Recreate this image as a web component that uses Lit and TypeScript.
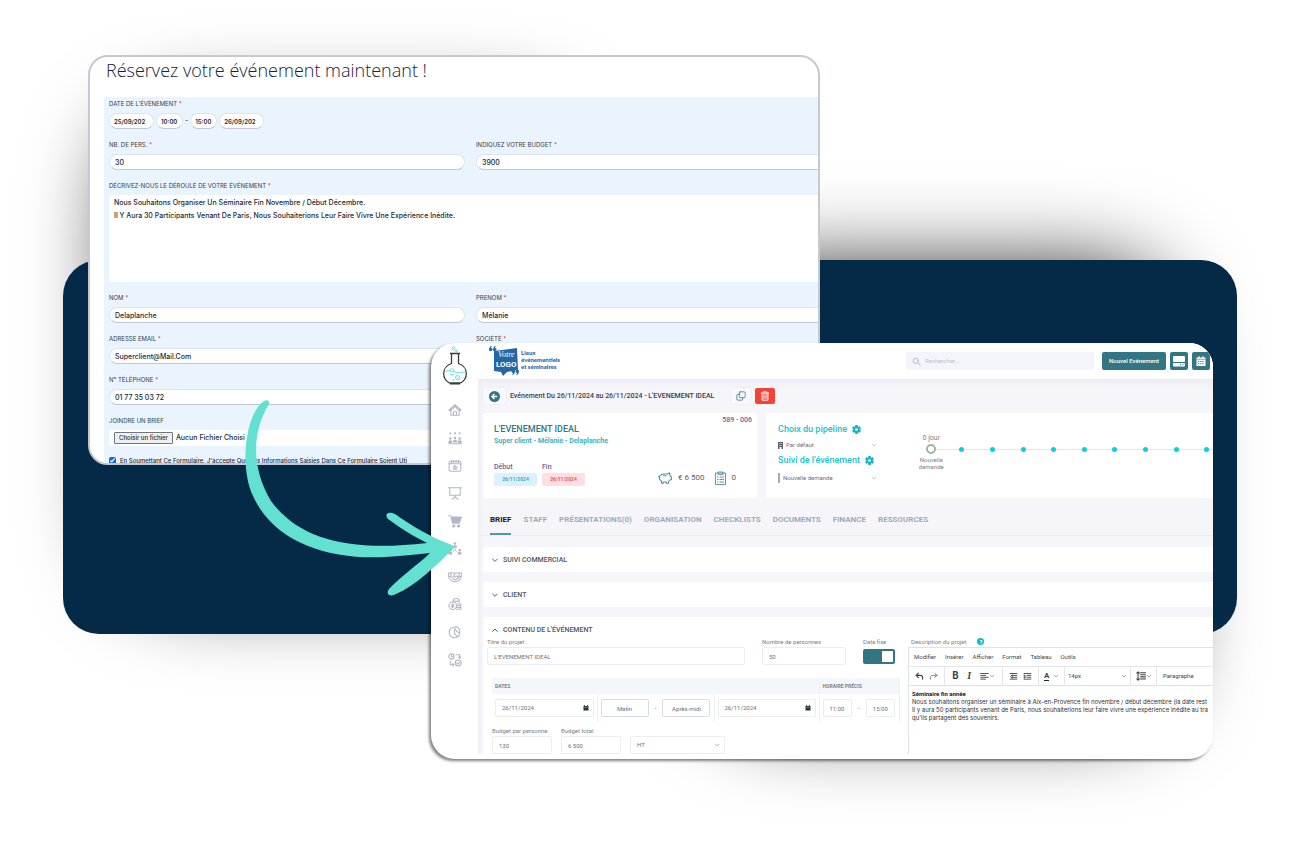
import { LitElement, html, css, svg } from "lit";
import { customElement } from "lit/decorators.js";

const line = (body: unknown, size = 14, weight = "1.8") => html`<svg
  width=${size}
  height=${size}
  viewBox="0 0 24 24"
  fill="none"
  stroke="currentColor"
  stroke-width=${weight}
  stroke-linecap="round"
  stroke-linejoin="round"
  aria-hidden="true"
>${body}</svg>`;

const chevron = svg`<path d="M5 9l7 7 7-7"/>`;
const chevronUp = svg`<path d="M5 16l7-7 7 7"/>`;
const person = (x: number, y: number) => svg`
  <circle cx=${x} cy=${y} r="2.2" fill="currentColor" stroke="none"/>
  <path d="M${x - 3.2} ${y + 7.5}v-2.4a3.2 2.2 0 0 1 6.4 0v2.4z" fill="currentColor" stroke="none"/>`;

const gear = html`<svg width="9" height="9" viewBox="0 0 24 24" aria-hidden="true">
  <g fill="#0fb9c4">
    <rect x="8.500" y="0" width="7" height="24" rx="1"/>
    <rect x="8.500" y="0" width="7" height="24" rx="1" transform="rotate(60 12 12)"/>
    <rect x="8.500" y="0" width="7" height="24" rx="1" transform="rotate(120 12 12)"/>
    <circle cx="12" cy="12" r="8.500"/>
  </g>
  <circle cx="12" cy="12" r="3.6" fill="#fff"/>
</svg>`;

const calendar = html`<svg width="6" height="6" viewBox="0 0 12 12" aria-hidden="true">
  <path d="M1 2h10v9H1z" fill="#2b2f36"/><path d="M3 0v3M9 0v3" stroke="#2b2f36" stroke-width="1.6"/>
  <path d="M2.500 4.500h7" stroke="#fff" stroke-width=".8"/>
</svg>`;

const navItems: [string, unknown][] = [
  ["Accueil", svg`<path d="M2 12L12 3l10 9M5 10v11h14V10M9.500 21v-6h5v6"/><path d="M2 12l2 1.500L12 6l8 7.500 2-1.500"/>`],
  ["Équipes", svg`<g fill="currentColor" stroke="none"><circle cx="4" cy="4" r="1.800"/><circle cx="12" cy="4" r="1.800"/><circle cx="20" cy="4" r="1.800"/></g>${person(4, 13)}${person(12, 12)}${person(20, 13)}<path d="M1 22h22"/>`],
  ["Événements", svg`<rect x="2" y="4" width="20" height="17" rx="2"/><path d="M2 8h20M6 2v4M10 2v4M14 2v4M18 2v4"/><path d="M12 11l1.100 2.400 2.500.3-1.900 1.700.5 2.600-2.200-1.300L9.800 18l.5-2.600-1.900-1.700 2.500-.3z"/>`],
  ["Présentations", svg`<path d="M1 3h22M3 3v13h18V3M12 16v4M12 18l-5 5M12 18l5 5"/>`],
  ["Achats", svg`<path d="M1 3h4l3 13h12"/><path d="M6 5h17l-3 9H8z" fill="currentColor"/><circle cx="10" cy="20.500" r="1.800" fill="currentColor"/><circle cx="18" cy="20.500" r="1.800" fill="currentColor"/>`],
  ["Organisation", svg`${person(12, 2.5)}${person(4, 14)}${person(20, 14)}<path d="M12 11v3M9 17l3-3 3 3" stroke-width="1.400"/>`],
  ["Partenaires", svg`<path d="M1 5h22v5c0 6-5 10-11 10S1 16 1 10z"/><path d="M1 11h4l5 5 2 1 3-1 4-5h4M5 5v6M19 5v6M12 7l-3 4 3 1 3-2 4 4"/>`],
  ["Finance", svg`<circle cx="8" cy="15" r="6.500"/><path d="M8 11.500v7M6 13.500h4M6 16.500h4"/><ellipse cx="14" cy="5" rx="5" ry="2.500"/><path d="M19 5v4M9 5v3M15 12h7v9h-8M15 15h7M15 18h7"/>`],
  ["Temps", svg`<path d="M9 4C4 5 2 9 2 13c0 5 4 9 9 9s9-4 9-8M11 8v6l4 5M13 2c5 2 8 6 7 12l-5-3-4-6z"/>`],
  ["Suivi", svg`<circle cx="6" cy="6" r="4.500"/><path d="M6 3.500V6h2M14 3h6v6M18 7l2 2 2-2M4 14v6h6M8 18l2 2-2 2"/><circle cx="17.500" cy="17" r="5"/><path d="M15 17l2 2 3-3.500"/>`],
];

@customElement("booking-form")
export class BookingForm extends LitElement {
  static styles = css`
    :host {
      display: block;
      min-width: 0;
      overflow: hidden;
      box-sizing: border-box;
      border: 2px solid #c6cad0;
      border-radius: 20px;
      background: #fff;
      color: #23282f;
      font: 400 7px/10px Inter, "Open Sans", sans-serif;
    }
    .heading {
      margin: 0;
      padding: 0 16px;
      height: 40px;
      font: 300 18px/26px "Open Sans", sans-serif;
      color: #16213c;
    }
    .form {
      display: grid;
      grid-template-columns: minmax(0, 1fr) minmax(0, 1fr);
      gap: 11px;
      margin: 0 -19px 0 14px;
      padding: 2px 5px;
      background: #eaf4fe;
    }
    .field {
      display: flex;
      flex-direction: column;
      gap: 4px;
      min-width: 0;
    }
    .wide {
      grid-column: 1 / -1;
    }
    .label {
      font-size: 6px;
      color: #3a4048;
      text-transform: uppercase;
      white-space: nowrap;
    }
    .star {
      color: #e02a3c;
    }
    .row {
      display: flex;
      gap: 2px;
      align-items: center;
    }
    input,
    textarea,
    button {
      font: 500 7px/13px Inter, sans-serif;
      color: #23282f;
      box-sizing: border-box;
      margin: 0;
    }
    .box {
      width: 100%;
      height: 16px;
      padding: 0 5px;
      border: 1px solid #dde4ec;
      border-bottom-color: #c3c8cf;
      border-radius: 8px;
      background: #fff;
    }
    .row .box {
      padding: 0 4px;
      font-size: 6px;
      font-weight: 600;
    }
    .row .date {
      width: 45px;
    }
    .row .time {
      width: 27px;
    }
    textarea {
      display: block;
      width: 100%;
      height: 87px;
      padding: 1px 5px;
      border: 0;
      border-radius: 2px;
      resize: none;
      background: #fff;
    }
    .file {
      display: flex;
      align-items: center;
      gap: 3px;
      height: 16px;
      padding-left: 5px;
      background: #fff;
      font-weight: 500;
      border-radius: 2px;
    }
    .pick {
      height: 12px;
      padding: 0 4px;
      border: 1px solid #70757c;
      border-radius: 1px;
      background: #efefef;
      font-size: 6px;
      line-height: 10px;
    }
    .terms {
      display: flex;
      align-items: center;
      gap: 4px;
      height: 7px;
      font-size: 6px;
      font-weight: 500;
      white-space: nowrap;
    }
    .terms input {
      width: 7px;
      height: 7px;
      accent-color: #0b6be0;
    }
  `;

  private field(id: string, label: string, value: string) {
    return html`<div class="field">
      <label class="label" for=${id}>${label} <span class="star">*</span></label>
      <input class="box" id=${id} .value=${value} />
    </div>`;
  }

  private pickFile() {
    (this.renderRoot.querySelector("#brief") as HTMLInputElement).click();
  }

  render() {
    return html`
      <h1 class="heading">Réservez votre événement maintenant !</h1>
      <form class="form">
        <div class="field wide">
          <label class="label" for="d1">Date de l'événement <span class="star">*</span></label>
          <div class="row">
            <input class="box date" id="d1" .value=${"25/09/202"} />
            <input class="box time" aria-label="Heure de début" .value=${"10:00"} />
            <span>-</span>
            <input class="box time" aria-label="Heure de fin" .value=${"15:00"} />
            <input class="box date" aria-label="Date de fin" .value=${"26/09/202"} />
          </div>
        </div>
        ${this.field("pers", "Nb. de pers.", "30")} ${this.field("budget", "Indiquez votre budget", "3900")}
        <div class="field wide">
          <label class="label" for="desc">Décrivez-nous le déroulé de votre événement <span class="star">*</span></label>
          <textarea id="desc" .value=${"Nous Souhaitons Organiser Un Séminaire Fin Novembre / Début Décembre.\nIl Y Aura 30 Participants Venant De Paris, Nous Souhaiterions Leur Faire Vivre Une Expérience Inédite."}></textarea>
        </div>
        ${this.field("nom", "Nom", "Delaplanche")} ${this.field("prenom", "Prenom", "Mélanie")}
        ${this.field("email", "Adresse email", "Superclient@Mail.Com")} ${this.field("societe", "Société", "")}
        ${this.field("tel", "N° téléphone", "01 77 35 03 72")}
        <div class="field wide">
          <label class="label" for="brief">Joindre un brief</label>
          <div class="file">
            <button class="pick" type="button" @click=${this.pickFile}>Choisir un fichier</button>
            <span>Aucun Fichier Choisi</span>
            <input id="brief" type="file" hidden />
          </div>
        </div>
        <label class="terms wide">
          <input type="checkbox" checked />
          <span>En Soumettant Ce Formulaire, J'accepte Que Les Informations Saisies Dans Ce Formulaire Soient Uti</span>
        </label>
      </form>
    `;
  }
}

@customElement("event-dashboard")
export class EventDashboard extends LitElement {
  static styles = css`
    :host {
      display: grid;
      grid-template-columns: 47px minmax(0, 1fr);
      min-width: 0;
      overflow: hidden;
      border-radius: 24px;
      background: #fff;
      box-shadow: -2px 2px 3px rgba(0, 0, 0, 0.5);
      color: #5f656d;
      font: 400 6px/8px Roboto, sans-serif;
      white-space: nowrap;
    }
    svg {
      display: block;
      flex: none;
    }
    input,
    select,
    button {
      box-sizing: border-box;
      margin: 0;
      padding: 0;
      font: inherit;
      color: inherit;
    }
    button {
      border: 0;
      display: flex;
      align-items: center;
      justify-content: center;
    }
    .side {
      display: flex;
      flex-direction: column;
      align-items: center;
      color: #b3b6c4;
      padding: 3px 0 92px;
      gap: 18px;
    }
    .nav {
      flex: 1;
      display: flex;
      flex-direction: column;
      justify-content: space-between;
    }
    .nav a {
      color: inherit;
    }
    .main {
      overflow: hidden;
      margin-bottom: 5px;
      background: #f6f6fa;
      min-width: 0;
    }
    .top {
      display: flex;
      align-items: center;
      gap: 4px;
      height: 36px;
      padding: 0 0 0 11px;
      margin-right: -19px;
      background: #fff;
    }
    .search {
      display: flex;
      align-items: center;
      gap: 4px;
      width: 188px;
      height: 18px;
      margin: 0 4px 0 auto;
      padding-left: 6px;
      box-sizing: border-box;
      border-radius: 2px;
      background: #f4f5fb;
      color: #b0b3c4;
    }
    .search input {
      border: 0;
      background: none;
      min-width: 0;
      flex: 1;
    }
    .search input::placeholder {
      color: #b9bccb;
    }
    .act {
      height: 18px;
      width: 18px;
      border-radius: 2px;
      background: #327683;
      color: #fff;
      font-weight: 500;
      flex: none;
    }
    .new {
      width: 64px;
    }
    .body {
      padding: 9px 0 0 5px;
      box-shadow: inset 0 8px 12px -6px #e8e7ef, inset 4px 0 4px -2px #eeeef4;
    }
    .crumb {
      display: flex;
      align-items: center;
      gap: 4px;
      height: 16px;
      color: #3a3f47;
      font: 500 7px/16px Roboto, sans-serif;
    }
    .sq {
      width: 20px;
      height: 16px;
      border-radius: 2px;
      background: #f9f9fd;
      box-shadow: 0 0 2px #dcdce8;
      color: #327683;
    }
    .back {
      width: 23px;
    }
    .crumb h1 {
      margin: 0 13px 0 0;
      font: inherit;
    }
    .red {
      background: #f44336;
      color: #fff;
      box-shadow: none;
    }
    .cards {
      display: grid;
      grid-template-columns: minmax(0, 274fr) minmax(0, 447fr);
      gap: 9px;
      margin-top: 9px;
    }
    .card {
      display: flex;
      height: 85px;
      box-sizing: border-box;
      background: #fff;
      border-radius: 3px;
    }
    .sum {
      flex-direction: column;
      padding: 3px 5px 12px 11px;
    }
    .ref {
      text-align: right;
      color: #63659a;
      font: 500 7px/8px Roboto, sans-serif;
    }
    .name {
      margin: 0;
      color: #2c7c87;
      font: 500 9px/11px Roboto, sans-serif;
    }
    .who {
      color: #35b6bc;
      font: 700 7px/12px Roboto, sans-serif;
    }
    .foot {
      display: flex;
      align-items: flex-end;
      gap: 5px;
      margin-top: auto;
    }
    .when {
      color: #63659a;
      font: 500 7px/12px Roboto, sans-serif;
    }
    .pill {
      display: block;
      width: 43px;
      height: 13px;
      border-radius: 2px;
      background: #def0ff;
      color: #2fb3bd;
      text-align: center;
      font: 700 5px/13px Roboto, sans-serif;
    }
    .end {
      background: #ffdfe2;
      color: #f0525f;
    }
    .nums {
      display: flex;
      flex: 1;
      align-items: center;
      justify-content: flex-end;
      gap: 6px;
      padding: 0 16px 1px 0;
      color: #5a6069;
      font: 400 8px/14px Roboto, sans-serif;
    }
    .nums svg {
      color: #4f909b;
    }
    .count {
      margin-left: 4px;
    }
    .pipe {
      padding: 11px 0 0 12px;
      gap: 34px;
    }
    .sets {
      width: 104px;
      flex: none;
    }
    .set {
      display: flex;
      align-items: center;
      gap: 5px;
      margin: 0;
      color: #17c3cd;
      font: 500 9px/11px Roboto, sans-serif;
    }
    .pick {
      display: flex;
      align-items: center;
      gap: 3px;
      height: 20px;
      padding-right: 5px;
      color: #6a7078;
    }
    .pick svg {
      color: #8d93a5;
    }
    select {
      appearance: none;
      border: 0;
      background: none;
      flex: 1;
      min-width: 0;
    }
    .bar {
      width: 2px;
      height: 10px;
      background: #a4b0a8;
    }
    .low {
      height: 24px;
    }
    .steps {
      flex: 1;
      display: grid;
      grid-template-columns: repeat(10, minmax(0, 1fr));
      margin: 9px -9px 0 0;
      padding: 0;
      list-style: none;
    }
    .step {
      display: flex;
      flex-direction: column;
      align-items: center;
      color: #7b8188;
      text-align: center;
      line-height: 7px;
    }
    .days {
      height: 11px;
      line-height: 10px;
      font-size: 7px;
    }
    .rail {
      display: flex;
      align-items: center;
      justify-content: center;
      width: 100%;
      height: 10px;
      margin-bottom: 2px;
      background: linear-gradient(#e3e5e6, #e3e5e6) 0 50% / 100% 1px no-repeat;
    }
    .first {
      background-size: 50% 1px;
      background-position: 100% 50%;
    }
    .dot {
      width: 5px;
      height: 5px;
      border-radius: 50%;
      background: #05d3dc;
    }
    .ring {
      width: 6px;
      height: 6px;
      border: 2px solid #a4b0a8;
      border-radius: 50%;
      background: #fff;
    }
    .tabs {
      display: flex;
      gap: 12px;
      margin: 6px 0 11px -5px;
      padding-left: 12px;
      border-bottom: 1px solid #ececf2;
    }
    .tab {
      padding: 10px 0 8px;
      border-bottom: 2px solid transparent;
      color: #9fabb8;
      font: 700 8px/11px Roboto, sans-serif;
      text-decoration: none;
    }
    .on {
      color: #15181c;
      border-color: #4c9aa5;
    }
    .panel {
      margin: 0 0 9px;
      border-radius: 3px 0 0 3px;
      background: #fff;
    }
    .ph {
      display: flex;
      align-items: center;
      justify-content: flex-start;
      gap: 4px;
      width: 100%;
      height: 25px;
      padding-left: 8px;
      background: none;
      color: #50565e;
      font: 500 7px/8px Roboto, sans-serif;
    }
    .ph svg {
      color: #327683;
    }
    .fold {
      margin-bottom: 10px;
    }
    .content {
      display: grid;
      grid-template-columns: 412px minmax(0, 1fr);
      gap: 9px;
      padding-left: 4px;
      margin-top: -6px;
    }
    .lab {
      display: flex;
      align-items: center;
      gap: 11px;
      height: 11px;
      color: #7a8087;
    }
    .in {
      display: block;
      width: 100%;
      height: 18px;
      padding: 0 6px;
      border: 1px solid #ecedf1;
      border-radius: 2px;
      background: #fff;
      color: #6c7279;
    }
    .line {
      display: grid;
      grid-template-columns: 258px 84px 32px;
      gap: 17px;
    }
    .toggle {
      appearance: none;
      display: block;
      width: 32px;
      height: 15px;
      margin-top: 2px;
      border-radius: 2px;
      border: 2px solid #327683;
      background: linear-gradient(#fff, #fff) 100% 0 / 11px 11px no-repeat padding-box, #327683;
    }
    table {
      width: 407px;
      margin: 13px 0 3px 5px;
      border-collapse: collapse;
      table-layout: fixed;
    }
    th {
      box-sizing: border-box;
      height: 16px;
      padding: 0 3px;
      background: #f3f6fa;
      color: #7b828b;
      text-align: left;
      font: 700 5px/8px Roboto, sans-serif;
    }
    td,
    .c4 {
      border-left: 1px solid #eceff3;
    }
    tr > :first-child {
      border-left: 0;
    }
    tr > :last-child {
      border-right: 1px solid #eceff3;
    }
    td {
      padding: 5px 3px;
    }
    .c1 {
      width: 105px;
    }
    .c2 {
      width: 117px;
    }
    .c4 {
      width: 80px;
    }
    .pair {
      display: flex;
      align-items: center;
      justify-content: space-between;
      gap: 6px;
    }
    .mid .in {
      width: 48px;
      border-color: #d5dbe8;
    }
    .in.ctr {
      text-align: center;
    }
    .date {
      display: flex;
      align-items: center;
      justify-content: space-between;
      box-sizing: border-box;
      padding-right: 4px;
    }
    .date input {
      border: 0;
      background: none;
      min-width: 0;
      flex: 1;
    }
    .money {
      display: grid;
      grid-template-columns: 60px 60px 95px;
      gap: 9px;
      align-items: end;
      padding-left: 5px;
    }
    .help {
      display: block;
      width: 7px;
      height: 7px;
      border-radius: 50%;
      background: #0fb9c4;
      color: #fff;
      text-align: center;
      font: 700 6px/7px Roboto, sans-serif;
    }
    .desc {
      padding-left: 3px;
    }
    .editor {
      height: 112px;
      border: solid #dfe1e5;
      border-width: 1px 0 0 1px;
      color: #3f444b;
    }
    .menu {
      display: flex;
      gap: 9px;
      height: 18px;
      padding-left: 5px;
      border-bottom: 1px solid #e3e5e8;
    }
    .menu button {
      background: none;
    }
    .tools {
      display: flex;
      height: 18px;
      border-bottom: 1px solid #dfe1e5;
    }
    .grp {
      display: flex;
      align-items: center;
      justify-content: space-around;
      box-sizing: border-box;
      padding: 0 3px;
      border-right: 1px solid #e3e5e8;
      flex: none;
    }
    .grp button {
      background: none;
    }
    .w26 {
      width: 26px;
    }
    .w36 {
      width: 36px;
    }
    .w58 {
      width: 58px;
    }
    .w66 {
      width: 66px;
    }
    .last {
      border: 0;
      padding-left: 6px;
    }
    .bold {
      font: 700 10px/12px Roboto, sans-serif;
    }
    .ital {
      font: italic 700 10px/12px "Liberation Serif", serif;
    }
    .ink {
      font: 700 8px/8px Roboto, sans-serif;
      border-bottom: 1px solid #222;
    }
    .text {
      margin: 0;
      padding: 4px 0 0 3px;
      color: #2a2e34;
      font: 400 6px/8px Inter, Roboto, sans-serif;
    }
    .text strong {
      color: #15181c;
      font-family: Roboto, sans-serif;
    }
  `;

  private select(id: string, label: string, value: string) {
    return html`<select id=${id} aria-label=${label}><option>${value}</option></select>${line(chevron, 6)}`;
  }

  private date(label: string) {
    return html`<div class="in date"><input aria-label=${label} .value=${"26/11/2024"} />${calendar}</div>`;
  }

  render() {
    const tabs = ["BRIEF", "STAFF", "PRÉSENTATIONS(0)", "ORGANISATION", "CHECKLISTS", "DOCUMENTS", "FINANCE", "RESSOURCES"];
    return html`
      <aside class="side">
        <svg width="26" height="39" viewBox="0 0 26 39" fill="none" aria-hidden="true">
          <g stroke="#5fe0d0"><circle cx="11.500" cy="2.500" r="1.500"/><circle cx="14.500" cy="5" r=".9"/></g>
          <g stroke="#3b3b3b" stroke-width="1.300">
            <path d="M8 7.500h10M9.500 8v9.500C5 19 1.700 23 1.700 27.500c0 3.800 2 7.300 5.300 9.300h12c3.300-2 5.300-5.500 5.300-9.300 0-4.500-3.300-8.500-7.800-10V8"/>
            <path d="M8 37.800h10" stroke-width="1.600"/>
          </g>
          <g stroke="#5fe0d0"><path d="M3.500 25.500c3-2 5 0 7 0 3 0 4 2.500 8 1 2-.6 4-.2 5.500.3M8 25c0-3 4-3 4 0M8 28c1 1 3 1 4 0"/><circle cx="15.500" cy="31.500" r="2"/><circle cx="11.500" cy="34" r=".6"/></g>
        </svg>
        <nav class="nav">${navItems.map(([t, i]) => html`<a href="#" aria-label=${t}>${line(i)}</a>`)}</nav>
      </aside>
      <div class="main">
        <header class="top">
          <svg width="74" height="30" viewBox="0 0 74 30" role="img" aria-label="Votre logo">
            <path d="M5 5l23-3 1 22-11 2-4 4-2-4-7-1z" fill="#2467a5"/>
            <g fill="#2467a5"><path d="M0 4c0-2 1-4 3-4-1 1-1 2-1 2 2 0 2 3 0 3-1 0-2 0-2-1zM4 4c0-2 1-4 3-4-1 1-1 2-1 2 2 0 2 3 0 3-1 0-2 0-2-1zM26 25c0 2-1 4-3 4 1-1 1-2 1-2-2 0-2-3 0-3 1 0 2 0 2 1zM30 25c0 2-1 4-3 4 1-1 1-2 1-2-2 0-2-3 0-3 1 0 2 0 2 1z"/></g>
            <g fill="#fff">
              <text x="9" y="11" font-family="Liberation Serif" font-style="italic" font-size="8">Votre</text>
              <text x="7" y="21" font-family="Roboto" font-weight="700" font-size="8">LOGO</text>
            </g>
            <g fill="#2467a5" font-family="Lato" font-weight="900" font-size="6">
              <text x="32" y="9">Lieux</text><text x="32" y="16">événementiels</text><text x="32" y="23">et séminaires</text>
            </g>
          </svg>
          <label class="search">
            ${line(svg`<circle cx="10" cy="10" r="7"/><path d="M15 15l7 7"/>`, 9, "2.4")}
            <input type="search" placeholder="Rechercher..." aria-label="Rechercher" />
          </label>
          <button class="act new">Nouvel Evénement</button>
          <button class="act" aria-label="Stockage">
            <svg width="12" height="12" viewBox="0 0 12 12"><rect width="12" height="6" y="1" rx="1" fill="#fff"/><rect y="8" width="12" height="3.500" rx="1" fill="#fff"/><path d="M7 9.700h1M9.500 9.700h1" stroke="#327683"/></svg>
          </button>
          <button class="act" aria-label="Calendrier">
            <svg width="10" height="10" viewBox="0 0 10 10"><path d="M.5 1.500h9V10h-9z" fill="#fff"/><path d="M3 0v2M7 0v2" stroke="#fff"/><path d="M.5 3.300h9" stroke="#327683" stroke-width=".6"/><path d="M2 5.500h6M2 7.700h6" stroke="#327683" stroke-dasharray="1.200 1"/></svg>
          </button>
          <button class="act" aria-label="Plus"></button>
        </header>
        <div class="body">
          <div class="crumb">
            <button class="sq back" aria-label="Retour">
              <svg width="11" height="11" viewBox="0 0 12 12"><circle cx="6" cy="6" r="6" fill="#327683"/><path d="M9 6H3.500M6 3.200L3.200 6 6 8.800" stroke="#fff" stroke-width="1.500" fill="none"/></svg>
            </button>
            <h1>Evénement Du 26/11/2024 au 26/11/2024 - L'EVENEMENT IDEAL</h1>
            <button class="sq" aria-label="Dupliquer">${line(svg`<rect x="8" y="2" width="14" height="14" rx="2"/><path d="M8 8H4a2 2 0 0 0-2 2v10a2 2 0 0 0 2 2h10a2 2 0 0 0 2-2v-4"/>`, 10)}</button>
            <button class="sq red" aria-label="Supprimer">${line(svg`<path d="M3 5h18M8 5V2h8v3M5 5v17h14V5M9.500 9v9M14.500 9v9"/>`, 10, "2.4")}</button>
          </div>
          <div class="cards">
            <section class="card sum">
              <div class="ref">589 - 006</div>
              <h2 class="name">L'EVENEMENT IDEAL</h2>
              <div class="who">Super client - Mélanie - Delaplanche</div>
              <div class="foot">
                <div class="when">Début<span class="pill">26/11/2024</span></div>
                <div class="when">Fin<span class="pill end">26/11/2024</span></div>
                <div class="nums">
                  ${line(svg`<path d="M2 12C2 7 7 5 11 5h5l4-2v4l2 3h1v5h-2l-3 3v3h-4v-2H9v2H6v-4c-2-1-4-2-4-5zM1 9l2 2M9 8h5"/>`)}
                  <span>€ 6 500</span>
                  <svg class="count" width="11" height="14" viewBox="0 0 11 14" fill="none" stroke="currentColor" stroke-width=".9"><path d="M.5 2h10v11.500H.5zM3 1h5v2.500H3zM2 6h1.500M2 8.500h1.500M2 11h1.500M4.500 6H9M4.500 8.500H9M4.500 11H9"/></svg>
                  <span>0</span>
                </div>
              </div>
            </section>
            <section class="card pipe">
              <div class="sets">
                <h3 class="set">Choix du pipeline ${gear}</h3>
                <div class="pick">
                  <svg width="5" height="7" viewBox="0 0 5 7"><path d="M0 0h5v7H3.500V5h-2v2H0z" fill="#5c626c"/><path d="M1 1.500h3M1 3.500h3" stroke="#fff" stroke-width=".5"/></svg>
                  ${this.select("p1", "Pipeline", "Par défaut")}
                </div>
                <h3 class="set">Suivi de l'événement ${gear}</h3>
                <div class="pick low"><span class="bar"></span>${this.select("p2", "Suivi", "Nouvelle demande")}</div>
              </div>
              <ol class="steps">
                ${Array.from({ length: 10 }, (_, i) =>
                  i === 0
                    ? html`<li class="step"><span class="days">0 jour</span><span class="rail first"><span class="ring"></span></span>Nouvelle<br />demande</li>`
                    : html`<li class="step"><span class="days"></span><span class="rail"><span class="dot"></span></span></li>`
                )}
              </ol>
            </section>
          </div>
          <nav class="tabs">${tabs.map((t, i) => html`<a href="#" class="tab ${i ? "" : "on"}">${t}</a>`)}</nav>
          <section class="panel fold"><button class="ph">${line(chevron, 8, "3")}SUIVI COMMERCIAL</button></section>
          <section class="panel fold"><button class="ph">${line(chevron, 8, "3")}CLIENT</button></section>
          <section class="panel">
            <button class="ph">${line(chevronUp, 8, "3")}CONTENU DE L'ÉVÉNEMENT</button>
            <div class="content">
              <div>
                <div class="line">
                  <div><label class="lab" for="titre">Titre du projet</label><input class="in" id="titre" .value=${"L'EVENEMENT IDEAL"} /></div>
                  <div><label class="lab" for="nb">Nombre de personnes</label><input class="in" id="nb" .value=${"50"} /></div>
                  <div><label class="lab" for="fixe">Date fixe</label><input class="toggle" type="checkbox" role="switch" checked id="fixe" /></div>
                </div>
                <table>
                  <thead><tr><th class="c1">DATES</th><th class="c2"></th><th class="c1"></th><th class="c4">HORAIRE PRÉCIS</th></tr></thead>
                  <tbody><tr>
                    <td>${this.date("Date de début")}</td>
                    <td><div class="pair mid"><input class="in ctr" aria-label="Moment de début" .value=${"Matin"} />-<input class="in ctr" aria-label="Moment de fin" .value=${"Après-midi"} /></div></td>
                    <td>${this.date("Date de fin")}</td>
                    <td><div class="pair"><input class="in" aria-label="Heure de début" .value=${"11:00"} />-<input class="in" aria-label="Heure de fin" .value=${"15:00"} /></div></td>
                  </tr></tbody>
                </table>
                <div class="money">
                  <div><label class="lab" for="bp">Budget par personne</label><input class="in" id="bp" .value=${"130"} /></div>
                  <div><label class="lab" for="bt">Budget total</label><input class="in" id="bt" .value=${"6 500"} /></div>
                  <div class="in date">${this.select("tax", "Taxe", "HT")}</div>
                </div>
              </div>
              <div>
                <div class="lab desc">Description du projet <span class="help">?</span></div>
                <div class="editor">
                  <div class="menu">${["Modifier", "Insérer", "Afficher", "Format", "Tableau", "Outils"].map((m) => html`<button>${m}</button>`)}</div>
                  <div class="tools">
                    <div class="grp w36">
                      <button aria-label="Annuler">${line(svg`<path d="M9 3L3 9l6 6M3 9h11c5 0 8 4 6 10"/>`, 9, "3")}</button>
                      <button aria-label="Rétablir">${line(svg`<path d="M15 3l6 6-6 6M21 9H10c-5 0-8 4-6 10"/>`, 9)}</button>
                    </div>
                    <div class="grp w58">
                      <button class="bold" aria-label="Gras">B</button><button class="ital" aria-label="Italique">I</button>
                      <button aria-label="Aligner">${line(svg`<path d="M2 4h20M2 9h13M2 14h20M2 19h13"/>`, 9, "2.4")}${line(chevron, 6)}</button>
                    </div>
                    <div class="grp w36">
                      <button aria-label="Diminuer le retrait">${line(svg`<path d="M3 4h18M11 9h10M11 14h10M3 19h18M8 8l-4 4 4 4z"/>`, 9, "2.4")}</button>
                      <button aria-label="Augmenter le retrait">${line(svg`<path d="M3 4h18M11 9h10M11 14h10M3 19h18M4 8l4 4-4 4z"/>`, 9, "2.4")}</button>
                    </div>
                    <div class="grp w26"><button class="ink" aria-label="Couleur">A</button>${line(chevron, 6)}</div>
                    <div class="grp w66">${this.select("size", "Taille", "14px")}</div>
                    <div class="grp w26"><button aria-label="Interligne">${line(svg`<path d="M5 2v20M2 5l3-3 3 3M2 19l3 3 3-3M11 4h12M11 9h12M11 14h12M11 19h12"/>`, 10, "2.6")}${line(chevron, 6)}</button></div>
                    <div class="grp last">Paragraphe</div>
                  </div>
                  <p class="text">
                    <strong>Séminaire fin année</strong><br />Nous souhaitons organiser un séminaire à Aix-en-Provence fin novembre / début décembre (la date rest<br />Il y aura 50 participants venant de Paris, nous souhaiterions leur faire vivre une expérience inédite au tra<br />qu'ils partagent des souvenirs.
                  </p>
                </div>
              </div>
            </div>
          </section>
        </div>
      </div>
    `;
  }
}

@customElement("app-root")
export class AppRoot extends LitElement {
  static styles = css`
    :host {
      display: block;
      background: #fff;
    }
    .stage {
      display: grid;
      grid-template-columns: 63fr 25fr 343fr 389fr 393fr 24fr 53fr;
      grid-template-rows: 55px 205px 83px 122px 169px 125px 87px;
      min-height: 100vh;
      overflow: hidden;
    }
    .stage > * {
      min-width: 0;
      min-height: 0;
    }
    .glow {
      border-radius: 60px;
      background: #000;
      box-shadow: 0 0 90px #000;
    }
    .one {
      grid-area: 2 / 3 / 6 / 5;
      margin: 65px 250px 50px 35px;
    }
    .two {
      grid-area: 3 / 4 / 7 / 6;
      margin: 14px 50px 45px 290px;
    }
    .navy {
      grid-area: 3 / 2 / 6 / 7;
      border-radius: 36px;
      background: #052a47;
    }
    .form {
      grid-area: 2 / 3 / 5 / 5;
    }
    .dash {
      grid-area: 4 / 4 / 7 / 6;
    }
    .arrow {
      grid-area: 4 / 3 / 7 / 5;
      width: 220px;
      height: 210px;
      margin: 50px 0 0 152px;
      pointer-events: none;
    }
  `;

  render() {
    return html`<main class="stage">
      <div class="glow one"></div>
      <div class="glow two"></div>
      <div class="navy"></div>
      <booking-form class="form"></booking-form>
      <event-dashboard class="dash"></event-dashboard>
      <svg class="arrow" viewBox="240 393 220 210" aria-hidden="true">
        <path fill="#63e0cf" d="M269 404C270 401 267 399 264 401C244 415 240 470 253 496C274 543 330 560 385 557C405 556 418 554 430 553C420 563 400 577 389 589C385 595 391 597 396 594C415 586 436 566 454 548Q455 546 452 545C430 537 412 526 395 514C388 511 384 514 388 519C400 528 415 537 427 543C350 552 300 540 271 501C250 466 253 430 269 404Z"/>
      </svg>
    </main>`;
  }
}
